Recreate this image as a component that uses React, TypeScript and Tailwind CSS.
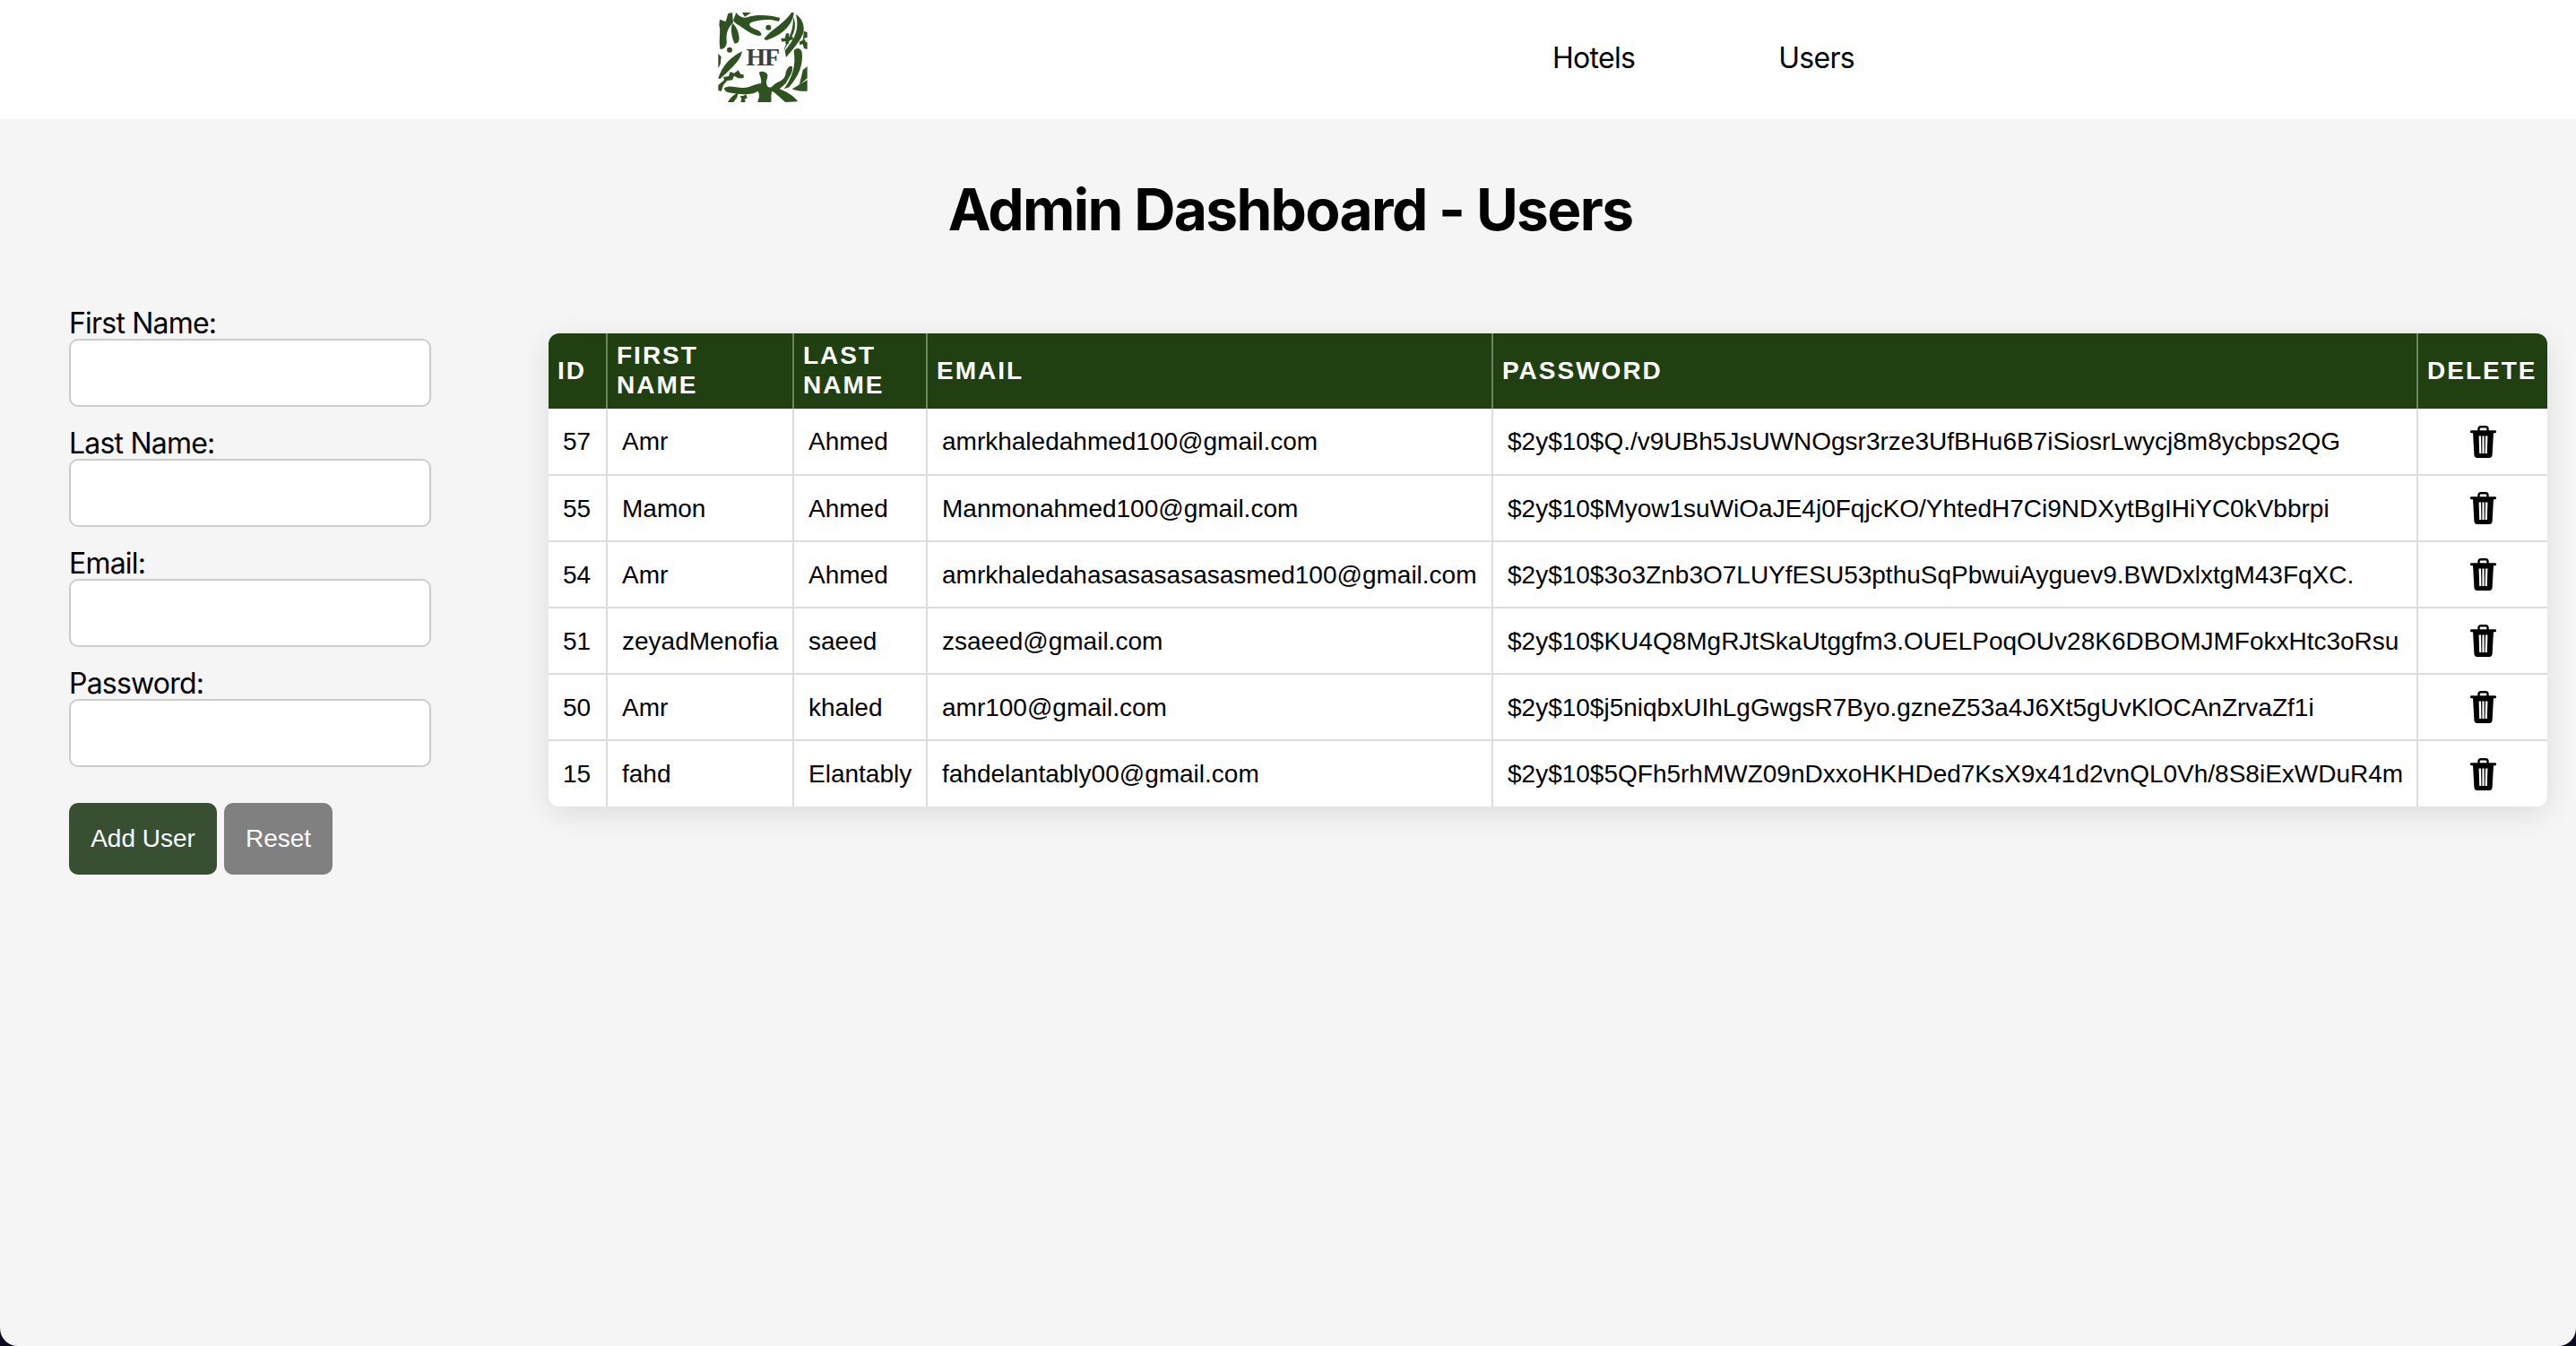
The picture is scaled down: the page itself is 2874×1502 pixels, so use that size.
const users = [
  { id: 57, first: 'Amr', last: 'Ahmed', email: 'amrkhaledahmed100@gmail.com', password: '$2y$10$Q./v9UBh5JsUWNOgsr3rze3UfBHu6B7iSiosrLwycj8m8ycbps2QG' },
  { id: 55, first: 'Mamon', last: 'Ahmed', email: 'Manmonahmed100@gmail.com', password: '$2y$10$Myow1suWiOaJE4j0FqjcKO/YhtedH7Ci9NDXytBgIHiYC0kVbbrpi' },
  { id: 54, first: 'Amr', last: 'Ahmed', email: 'amrkhaledahasasasasasasmed100@gmail.com', password: '$2y$10$3o3Znb3O7LUYfESU53pthuSqPbwuiAyguev9.BWDxlxtgM43FqXC.' },
  { id: 51, first: 'zeyadMenofia', last: 'saeed', email: 'zsaeed@gmail.com', password: '$2y$10$KU4Q8MgRJtSkaUtggfm3.OUELPoqOUv28K6DBOMJMFokxHtc3oRsu' },
  { id: 50, first: 'Amr', last: 'khaled', email: 'amr100@gmail.com', password: '$2y$10$j5niqbxUIhLgGwgsR7Byo.gzneZ53a4J6Xt5gUvKlOCAnZrvaZf1i' },
  { id: 15, first: 'fahd', last: 'Elantably', email: 'fahdelantably00@gmail.com', password: '$2y$10$5QFh5rhMWZ09nDxxoHKHDed7KsX9x41d2vnQL0Vh/8S8iExWDuR4m' },
];

function Logo() {
  return (
    <svg viewBox="125 42 298 300" className="mb-[5px] h-[100px] w-[100px]" fill="#2f5320">
      {/* top left */}
      <path d="M130 65 L150 72 L158 45 L172 42 L175 75 C160 90 150 110 153 135 C155 155 145 165 132 165 C125 140 135 100 128 85 Z" />
      <path d="M185 42 C195 55 210 65 232 55 C260 48 300 50 332 60 L328 72 C300 62 265 65 235 75 C225 80 230 92 250 98 C262 102 270 108 270 118 L262 120 C240 118 215 100 195 85 C185 80 180 75 175 68 Z" />
      <path d="M172 78 C185 85 195 110 195 130 C195 140 190 146 180 146 C170 125 165 100 172 78 Z" />
      <path d="M205 42 L235 42 L214 56 Z" />
      <circle cx="293" cy="92" r="9" />
      <circle cx="163" cy="167" r="9" />
      {/* top right */}
      <path d="M278 130 C300 100 345 80 370 42 L378 42 C375 85 335 120 285 135 Z" />
      <path d="M385 48 C405 60 415 85 410 110 C395 145 370 170 352 192 L348 170 C370 140 400 110 385 48 Z" />
      <path d="M375 55 C385 75 385 100 370 125 C362 140 352 155 345 170 C350 140 380 110 375 55 Z" />
      <path d="M335 128 L348 128 L352 112 L362 112 L362 124 L374 122 L376 132 L362 136 L360 148 L350 146 L350 138 L338 140 Z" />
      <path d="M412 104 L423 108 L423 125 L412 128 L418 140 L423 142 L423 165 L412 162 L408 148 L398 150 L396 140 L408 134 Z" />
      {/* left */}
      <path d="M125 180 L135 190 L132 215 L125 228 Z" />
      <path d="M125 262 C140 215 170 190 205 172 C200 200 175 225 130 265 Z" />
      <path d="M125 285 L145 268 L142 258 L160 255 L165 240 L178 245 L192 235 L200 248 L210 250 L210 262 L192 262 L178 254 L172 268 L155 270 L142 285 L135 306 L125 302 Z" />
      {/* bottom */}
      <path d="M145 295 C165 280 195 300 225 292 C245 286 255 280 268 280 C272 265 262 250 262 242 C270 236 285 240 290 250 C292 262 282 272 288 285 C290 292 298 298 310 285 C325 272 345 272 350 250 C352 232 362 218 372 222 C378 240 360 262 352 278 L330 298 C350 305 375 318 392 340 L350 342 C335 330 318 312 305 305 C300 320 304 332 302 342 L256 342 C262 328 265 318 258 305 C240 318 200 318 160 310 C150 308 145 302 145 295 Z" />
      <path d="M378 170 C385 158 402 160 405 175 C410 215 395 255 362 292 L345 298 C375 255 385 220 378 170 Z" />
      <path d="M408 235 L423 222 L423 262 L396 285 C400 268 405 250 408 235 Z" />
      <path d="M372 298 L423 268 L423 305 L405 305 C395 305 382 303 372 298 Z" />
      <path d="M157 342 C165 328 178 316 192 310 L188 326 L176 342 Z" />
      <path d="M200 342 L203 330 L198 322 L210 320 L218 316 L222 328 L214 332 L216 342 Z" />
      <text x="273" y="218" textAnchor="middle" fill="#3d3d3d" className="font-['Liberation_Serif',serif] text-[84px] font-bold tracking-[-4px]">HF</text>
    </svg>
  );
}

function TrashIcon() {
  return (
    <svg viewBox="0 0 29 36" className="mx-auto block h-[36px] w-[29px]">
      <path d="M9.5 7V3.5Q9.5 1.2 11.8 1.2H17.2Q19.5 1.2 19.5 3.5V7" fill="none" stroke="#000" strokeWidth="2.4" />
      <rect x="0" y="5.2" width="29" height="3" rx="1.2" fill="#000" />
      <path d="M3 7.5H26L24.6 32.5Q24.4 36 21 36H8Q4.6 36 4.4 32.5Z" fill="#000" />
      <path d="M9.6 11.5H12L12.4 31H10.2Z M13.4 11.5H15.6V31H13.4Z M17 11.5H19.4L18.8 31H16.6Z" fill="#fff" />
    </svg>
  );
}

function Field({ label, type = 'text' }: { label: string; type?: string }) {
  return (
    <div className="mb-[20px]">
      <label className="block h-[38px] text-[32px] leading-[41px] tracking-[-0.8px] text-black">{label}</label>
      <input type={type} className="block h-[76px] w-[404px] rounded-[10px] border-2 border-[#cccccc] bg-white" />
    </div>
  );
}

export default function App() {
  return (
    <div className="h-[1502px] w-[2874px] overflow-hidden bg-[#0b0b1e]">
      <div className="h-full w-full overflow-hidden rounded-b-[20px] bg-[#f5f5f5] font-['Inter',sans-serif]">
        <header className="flex h-[133px] items-center bg-white pl-[801px]">
          <Logo />
          <nav className="ml-[831px] flex gap-[160px] pb-[4px] text-[32px] tracking-[-0.7px] text-black">
            <a>Hotels</a>
            <a>Users</a>
          </nav>
        </header>

        <h1 className="mt-[62px] pl-[5px] text-center text-[64px] leading-[78px] font-bold tracking-[-1.65px] text-black">Admin Dashboard - Users</h1>

        <main className="mt-[67px] flex items-start pl-[77px]">
          <form className="w-[535px]">
            <Field label="First Name:" />
            <Field label="Last Name:" />
            <Field label="Email:" />
            <Field label="Password:" type="password" />
            <div className="mt-[40px] flex gap-[8px] font-['Liberation_Sans',sans-serif] text-[28px] text-white">
              <button type="button" className="h-[80px] w-[165px] rounded-[10px] bg-[#385031]">Add User</button>
              <button type="button" className="h-[80px] w-[121px] rounded-[10px] bg-[#808080]">Reset</button>
            </div>
          </form>

          <div className="mt-[32px] w-[2230px] overflow-hidden rounded-[12px] bg-white shadow-[0_8px_32px_rgba(0,0,0,0.1)]">
            <table className="w-full border-collapse font-['Liberation_Sans',sans-serif] text-[28px] text-black">
              <thead>
                <tr className="h-[84px] bg-[#214011] text-left text-[28px] leading-[33px] font-bold tracking-[2px] text-white uppercase">
                  <th className="w-[65px] border-r-2 border-[#6b8560] pb-[2px] pl-[10px]">ID</th>
                  <th className="w-[208px] border-r-2 border-[#6b8560] pb-[2px] pl-[10px]">First<br />Name</th>
                  <th className="w-[149px] border-r-2 border-[#6b8560] pb-[2px] pl-[10px]">Last<br />Name</th>
                  <th className="w-[631px] border-r-2 border-[#6b8560] pb-[2px] pl-[10px]">Email</th>
                  <th className="w-[1032px] border-r-2 border-[#6b8560] pb-[2px] pl-[10px]">Password</th>
                  <th className="pb-[2px] pl-[10px]">Delete</th>
                </tr>
              </thead>
              <tbody>
                {users.map(u => (
                  <tr key={u.id} className="h-[74px] border-b-2 border-[#dddddd] last:border-b-0">
                    <td className="border-r-2 border-[#dddddd] pt-[1px] pl-[16px]">{u.id}</td>
                    <td className="border-r-2 border-[#dddddd] pt-[1px] pl-[16px]">{u.first}</td>
                    <td className="border-r-2 border-[#dddddd] pt-[1px] pl-[16px]">{u.last}</td>
                    <td className="border-r-2 border-[#dddddd] pt-[1px] pl-[16px]">{u.email}</td>
                    <td className="border-r-2 border-[#dddddd] pt-[1px] pl-[16px]">{u.password}</td>
                    <td>
                      <TrashIcon />
                    </td>
                  </tr>
                ))}
              </tbody>
            </table>
          </div>
        </main>
      </div>
    </div>
  );
}
